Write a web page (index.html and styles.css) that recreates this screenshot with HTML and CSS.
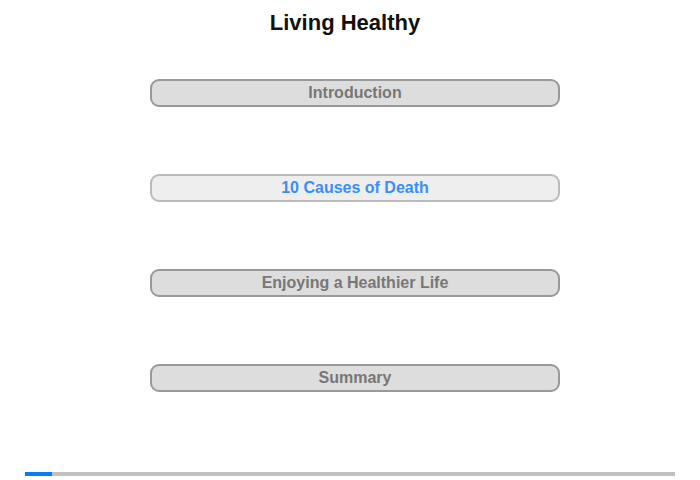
FILE: index.html
```html
<!DOCTYPE html>
<html lang="en">
<head>
    <meta charset="UTF-8">
    <title>Living Healthy</title>
    <link rel="stylesheet" href="styles.css">
</head>
<body>
    <div class="page">
        <h1 class="title">Living Healthy</h1>
        <div class="menu">
            <button class="item">Introduction</button>
            <button class="item current">10 Causes of Death</button>
            <button class="item">Enjoying a Healthier Life</button>
            <button class="item">Summary</button>
        </div>
        <div class="progress">
            <div class="done" style="width: 27px"></div>
        </div>
    </div>
</body>
</html>
```

FILE: styles.css
```css
body {
    margin: 0;
    font-family: "Liberation Sans", Arial, sans-serif;
    background: #fff;
}
.page {
    width: 700px;
    height: 480px;
    display: flex;
    flex-direction: column;
    align-items: center;
}
.title {
    margin: 10px 10px 0 0;
    font-size: 22px;
    line-height: 26px;
    color: #111;
}
.menu {
    margin: 43px 0 0 10px;
    display: flex;
    flex-direction: column;
    gap: 67px;
}
.item {
    width: 410px;
    height: 28px;
    border: 2px solid #999;
    border-radius: 9px;
    background: #ddd;
    color: #777;
    font-family: inherit;
    font-size: 16px;
    font-weight: bold;
    padding: 0;
    cursor: pointer;
}
.item.current {
    border-color: #bbb;
    background: #eee;
    color: #3a8ff5;
}
.progress {
    margin-top: 80px;
    width: 650px;
    height: 4px;
    background: #c0c0c0;
}
.done {
    height: 100%;
    background: #0a7cf5;
}
```
